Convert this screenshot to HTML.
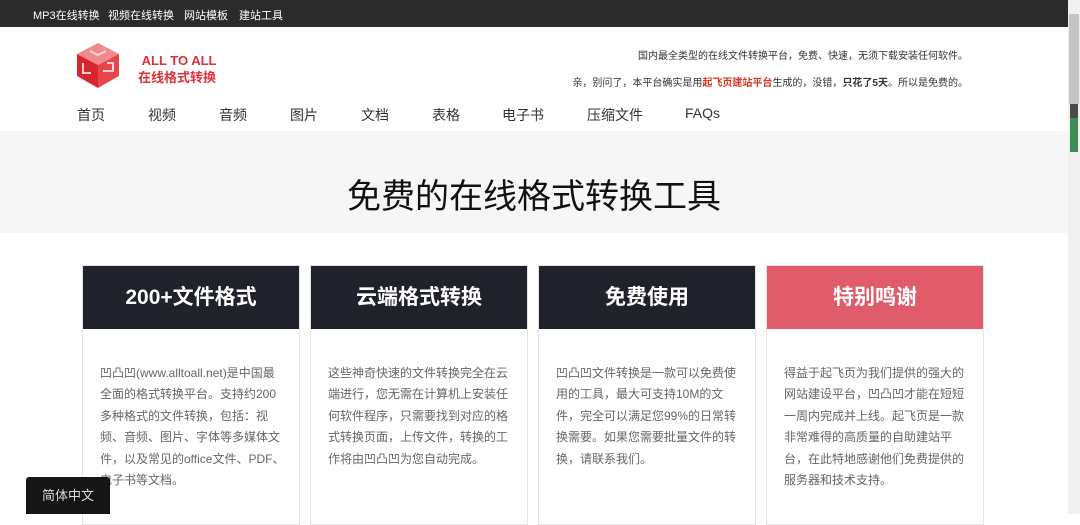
<!DOCTYPE html>
<html><head><meta charset="utf-8"><style>
*{margin:0;padding:0;box-sizing:border-box}
body{width:1080px;height:514px;overflow:hidden;background:#fff;font-family:"Liberation Sans","Noto Sans CJK SC",sans-serif;position:relative}
.top{position:absolute;left:0;top:0;width:1068px;height:27px;background:#2b2b2b;color:#fff;font-size:11px}
.top span{position:absolute;top:7px}
.logo{position:absolute;left:75px;top:41px}
.lt{position:absolute;left:138px;top:52px;color:#e0313a;font-weight:bold;font-size:13px;line-height:17px}
.info{position:absolute;right:112px;font-size:10px;color:#333}
.nav{position:absolute;top:105px;font-size:14px;color:#333}
.hero{position:absolute;left:0;top:131px;width:1068px;height:102px;background:#f6f6f6;text-align:center}
.hero h1{font-weight:normal;font-size:34px;color:#111;margin-top:38px}
.card{position:absolute;top:265px;width:218px;height:260px;border:1px solid #e4e4e4;background:#fff}
.card .h{height:63px;background:#20222b;color:#fff;font-weight:bold;font-size:21px;text-align:center;line-height:63px}
.card p{padding:34px 0 0 17px;white-space:nowrap;font-size:12px;line-height:21.4px;color:#666}
.lang{position:absolute;left:26px;top:477px;width:84px;height:37px;background:#151515;color:#ddd;font-size:13px;text-align:center;line-height:38px;border-radius:3px 3px 0 0}
.sb{position:absolute;left:1068px;top:0;width:12px;height:514px;background:#f0f0f0}
</style></head><body>
<div class="top"><span style="left:33px">MP3在线转换</span><span style="left:108px">视频在线转换</span><span style="left:184px">网站模板</span><span style="left:239px">建站工具</span></div>
<svg class="logo" width="46" height="48" viewBox="0 0 46 48"><polygon points="23,2 44,13 23,24 2,13" fill="#f08a8e"/><polygon points="2,13 23,24 23,47 2,35" fill="#d7262e"/><polygon points="44,13 23,24 23,47 44,35" fill="#e8454b"/><path d="M8,22v10h8M28,30h10v-8h-6M15,10l8,4 8-4" stroke="#fbd2d4" stroke-width="2" fill="none"/></svg>
<div class="lt">&nbsp;ALL TO ALL<br>在线格式转换</div>
<div class="info" style="top:47px">国内最全类型的在线文件转换平台，免费、快速，无须下载安装任何软件。</div>
<div class="info" style="top:74px">亲，别问了，本平台确实是用<b style="color:#e0301e">起飞页建站平台</b>生成的，没错，<b>只花了5天</b>。所以是免费的。</div>
<span class="nav" style="left:77px">首页</span><span class="nav" style="left:148px">视频</span><span class="nav" style="left:219px">音频</span><span class="nav" style="left:290px">图片</span><span class="nav" style="left:361px">文档</span><span class="nav" style="left:432px">表格</span><span class="nav" style="left:502px">电子书</span><span class="nav" style="left:587px">压缩文件</span><span class="nav" style="left:685px">FAQs</span>
<div class="hero"><h1>免费的在线格式转换工具</h1></div>
<div class="card" style="left:82px"><div class="h">200+文件格式</div><p>凹凸凹(www.alltoall.net)是中国最<br>全面的格式转换平台。支持约200<br>多种格式的文件转换，包括：视<br>频、音频、图片、字体等多媒体文<br>件，以及常见的office文件、PDF、<br>电子书等文档。</p></div>
<div class="card" style="left:310px"><div class="h">云端格式转换</div><p>这些神奇快速的文件转换完全在云<br>端进行，您无需在计算机上安装任<br>何软件程序，只需要找到对应的格<br>式转换页面，上传文件，转换的工<br>作将由凹凸凹为您自动完成。</p></div>
<div class="card" style="left:538px"><div class="h">免费使用</div><p>凹凸凹文件转换是一款可以免费使<br>用的工具，最大可支持10M的文<br>件，完全可以满足您99%的日常转<br>换需要。如果您需要批量文件的转<br>换，请联系我们。</p></div>
<div class="card" style="left:766px"><div class="h" style="background:#e05c6b">特别鸣谢</div><p>得益于起飞页为我们提供的强大的<br>网站建设平台，凹凸凹才能在短短<br>一周内完成并上线。起飞页是一款<br>非常难得的高质量的自助建站平<br>台，在此特地感谢他们免费提供的<br>服务器和技术支持。</p></div>
<div class="lang">简体中文</div>
<div class="sb"><div style="position:absolute;left:1px;top:14px;width:10px;height:90px;background:#c4c4c4"></div><div style="position:absolute;left:2px;top:104px;width:8px;height:48px;background:#4a4a4a"></div><div style="position:absolute;left:2px;top:118px;width:8px;height:34px;background:#3f8a55"></div></div>
</body></html>
